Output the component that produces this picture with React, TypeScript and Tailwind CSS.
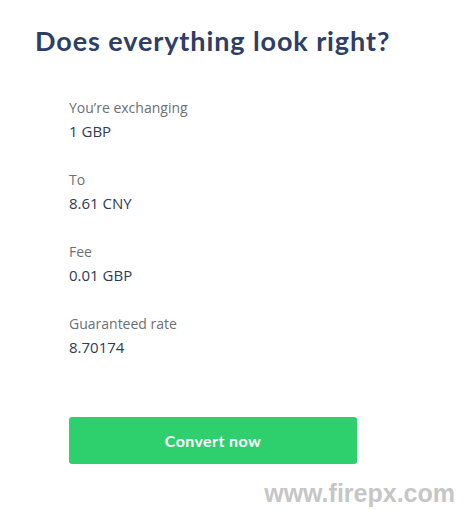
const rows = [
  { label: 'You’re exchanging', value: '1 GBP' },
  { label: 'To', value: '8.61 CNY' },
  { label: 'Fee', value: '0.01 GBP' },
  { label: 'Guaranteed rate', value: '8.70174' },
];

export default function App() {
  return (
    <div className="relative w-[466px] h-[510px] bg-white font-['Lato',sans-serif] overflow-hidden">
      <div className="pl-[35px] pt-[24px]">
        <h1 className="text-[27px] leading-[34px] font-bold text-[#2e3e64] tracking-[0.9px]">
          Does everything look right?
        </h1>
      </div>

      <div className="pl-[69px] pt-[39px] flex flex-col gap-[25px]">
        {rows.map(row => (
          <div key={row.label} className="flex flex-col">
            <span className="text-[14px] leading-[22px] text-[#6d6f75] font-['Open_Sans',sans-serif]">
              {row.label}
            </span>
            <span className="text-[15px] leading-[25px] text-[#2f3a56] font-['Open_Sans',sans-serif]">
              {row.value}
            </span>
          </div>
        ))}
      </div>

      <div className="pl-[69px] pt-[57px]">
        <button className="w-[288px] h-[47px] rounded-[3px] bg-[#2ed06e] text-white text-[16px] tracking-[0.4px] font-bold">
          Convert now
        </button>
      </div>

      <div className="absolute right-[11px] bottom-[-2px] text-[25px] font-bold text-[#c6c6c6] font-['Liberation_Sans',sans-serif]">
        www.firepx.com
      </div>
    </div>
  );
}
